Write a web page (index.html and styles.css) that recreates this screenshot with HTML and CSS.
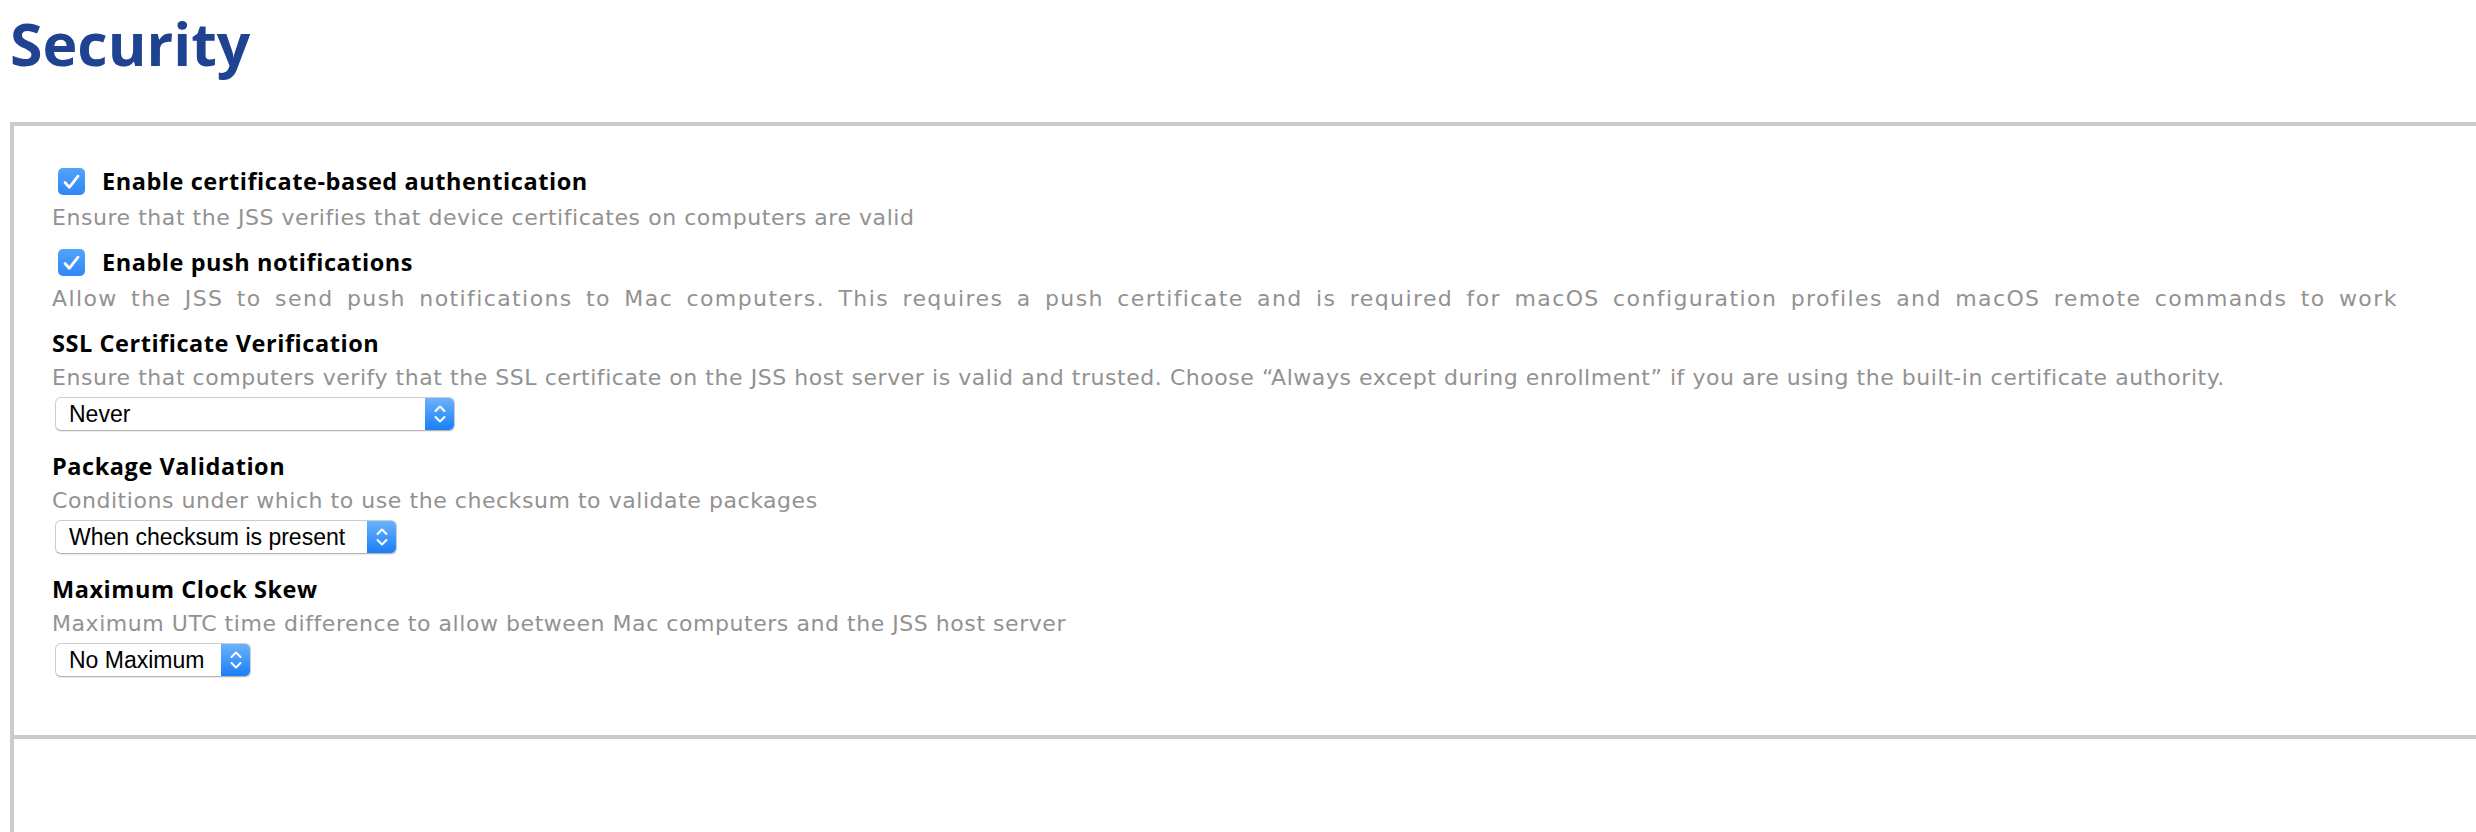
FILE: index.html
```html
<!DOCTYPE html>
<html lang="en">

<head>
    <meta charset="UTF-8">
    <title>Security</title>
    <link rel="stylesheet" href="styles.css">
</head>

<body>
    <h1 class="title">Security</h1>

    <div class="box">
        <div class="field">
            <label class="check">
                <span class="tick">
                    <svg width="27" height="27" viewBox="0 0 27 27">
                        <path d="M7 14.5 L11.3 19.3 L20 8.2" fill="none" stroke="#fff" stroke-width="2.8" stroke-linecap="round" stroke-linejoin="round"/>
                    </svg>
                </span>
                <span class="label">Enable certificate-based authentication</span>
            </label>
            <p class="desc">Ensure that the JSS verifies that device certificates on computers are valid</p>
        </div>

        <div class="field">
            <label class="check">
                <span class="tick">
                    <svg width="27" height="27" viewBox="0 0 27 27">
                        <path d="M7 14.5 L11.3 19.3 L20 8.2" fill="none" stroke="#fff" stroke-width="2.8" stroke-linecap="round" stroke-linejoin="round"/>
                    </svg>
                </span>
                <span class="label">Enable push notifications</span>
            </label>
            <p class="desc desc-wide">Allow the JSS to send push notifications to Mac computers. This requires a push certificate and is required for macOS configuration profiles and macOS remote commands to work</p>
        </div>

        <div class="field field-select">
            <div class="label">SSL Certificate Verification</div>
            <p class="desc">Ensure that computers verify that the SSL certificate on the JSS host server is valid and trusted. Choose “Always except during enrollment” if you are using the built-in certificate authority.</p>
            <div class="select w-never">
                <span class="value">Never</span>
                <span class="arrows">
                    <svg width="14" height="22" viewBox="0 0 14 22">
                        <path d="M2.5 8 L7 3.5 L11.5 8 M2.5 14 L7 18.5 L11.5 14" fill="none" stroke="#fff" stroke-width="2" stroke-linecap="round" stroke-linejoin="round"/>
                    </svg>
                </span>
            </div>
        </div>

        <div class="field field-select">
            <div class="label">Package Validation</div>
            <p class="desc">Conditions under which to use the checksum to validate packages</p>
            <div class="select w-package">
                <span class="value">When checksum is present</span>
                <span class="arrows">
                    <svg width="14" height="22" viewBox="0 0 14 22">
                        <path d="M2.5 8 L7 3.5 L11.5 8 M2.5 14 L7 18.5 L11.5 14" fill="none" stroke="#fff" stroke-width="2" stroke-linecap="round" stroke-linejoin="round"/>
                    </svg>
                </span>
            </div>
        </div>

        <div class="field field-select">
            <div class="label">Maximum Clock Skew</div>
            <p class="desc">Maximum UTC time difference to allow between Mac computers and the JSS host server</p>
            <div class="select w-skew">
                <span class="value">No Maximum</span>
                <span class="arrows">
                    <svg width="14" height="22" viewBox="0 0 14 22">
                        <path d="M2.5 8 L7 3.5 L11.5 8 M2.5 14 L7 18.5 L11.5 14" fill="none" stroke="#fff" stroke-width="2" stroke-linecap="round" stroke-linejoin="round"/>
                    </svg>
                </span>
            </div>
        </div>
    </div>

    <div class="box box-next"></div>
</body>

</html>
```

FILE: styles.css
```css
body {
    margin: 0;
    padding: 0 0 0 10px;
    font-family: "Open Sans", "DejaVu Sans", sans-serif;
    background: #fff;
    color: #000;
    overflow: hidden;
}

.title {
    margin: 3px 0 39px 0;
    font-size: 59px;
    line-height: 80px;
    font-weight: bold;
    color: #1f4390;
}

.box {
    display: flex;
    flex-direction: column;
    gap: 11px;
    border: 4px solid #cbcbcb;
    border-right: none;
    padding: 39px 0 52px 38px;
}

.box-next {
    border-top: none;
    border-bottom: none;
    height: 100px;
    padding: 0;
}

.field {
    display: flex;
    flex-direction: column;
    align-items: flex-start;
}

.field-select + .field-select {
    margin-top: 2px;
}

.check {
    display: flex;
    align-items: center;
    height: 32px;
}

.tick {
    display: block;
    width: 27px;
    height: 27px;
    margin: 0 17px 0 6px;
    border-radius: 5px;
    background: linear-gradient(#52a3f9, #2f87f5);
}

.tick svg {
    display: block;
}

.label {
    font-size: 23.5px;
    line-height: 32px;
    font-weight: bold;
    letter-spacing: 0.55px;
    white-space: nowrap;
}

.desc {
    margin: 4px 0 0;
    font-family: "DejaVu Sans", sans-serif;
    font-size: 22px;
    line-height: 34px;
    letter-spacing: 0.55px;
    color: #929292;
    white-space: nowrap;
}

.field-select .desc {
    margin-top: 2px;
}

.desc-wide {
    letter-spacing: 1.4px;
    word-spacing: 5px;
}

.select {
    display: flex;
    height: 34px;
    margin: 2px 0 6px 3px;
    box-sizing: border-box;
    border: 1px solid #cdcdcd;
    border-bottom-color: #b4b4b4;
    border-radius: 6px;
    background: #fff;
    box-shadow: 0 1px 1px rgba(0, 0, 0, 0.08);
    overflow: hidden;
}

.w-never {
    width: 400px;
}

.w-package {
    width: 342px;
}

.w-skew {
    width: 196px;
}

.select .value {
    flex: 1;
    padding-left: 13px;
    font-family: "Liberation Sans", Arial, sans-serif;
    font-size: 23px;
    line-height: 32px;
    white-space: nowrap;
}

.select .arrows {
    display: flex;
    align-items: center;
    justify-content: center;
    width: 29px;
    background: linear-gradient(#6bb2fb, #1a7ff8);
}

.arrows svg {
    display: block;
}
```
